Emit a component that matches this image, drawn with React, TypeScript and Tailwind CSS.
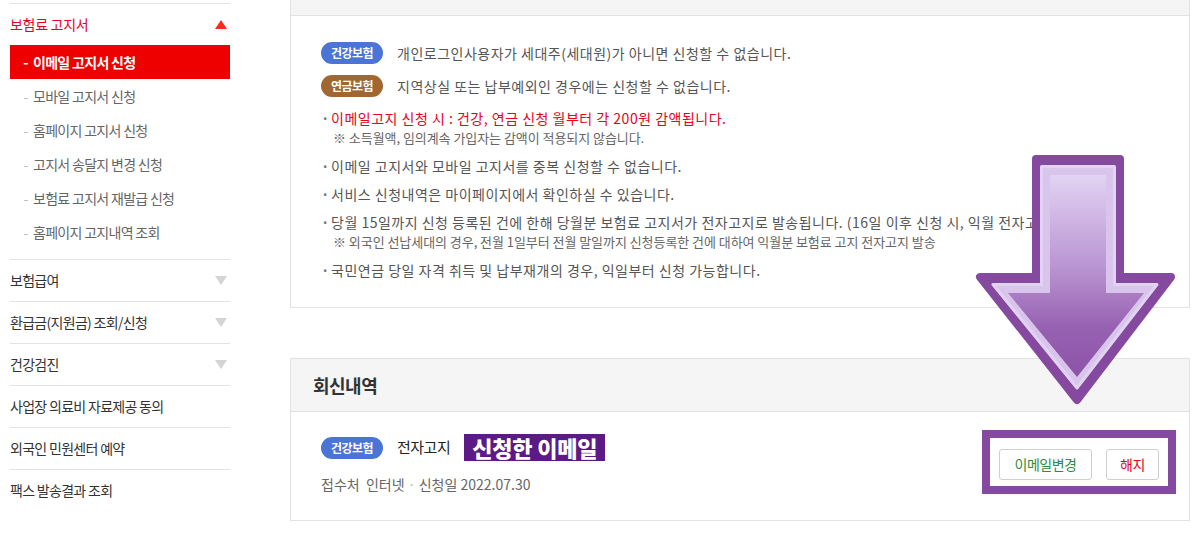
import React from 'react'

const subMenu = ['모바일 고지서 신청', '홈페이지 고지서 신청', '고지서 송달지 변경 신청', '보험료 고지서 재발급 신청', '홈페이지 고지내역 조회']

const otherMenu: { label: string; arrow: boolean }[] = [
    { label: '보험급여', arrow: true },
    { label: '환급금(지원금) 조회/신청', arrow: true },
    { label: '건강검진', arrow: true },
    { label: '사업장 의료비 자료제공 동의', arrow: false },
    { label: '외국인 민원센터 예약', arrow: false },
    { label: '팩스 발송결과 조회', arrow: false },
]

function Badge({ kind }: { kind: 'health' | 'pension' }) {
    return (
        <span
            className={`inline-flex h-[22px] w-[62px] shrink-0 items-center justify-center rounded-full text-[12px] font-bold tracking-[-0.5px] text-white ${kind === 'health' ? 'bg-[#4a74d5]' : 'bg-[#a06830]'}`}
        >
            {kind === 'health' ? '건강보험' : '연금보험'}
        </span>
    )
}

function Bullet({ children, className = '' }: { children: React.ReactNode; className?: string }) {
    return (
        <li className={`flex leading-[20px] ${className}`}>
            <span className="w-[10px] shrink-0 font-bold text-[#777]">·</span>
            <div>{children}</div>
        </li>
    )
}

function Arrow() {
    return (
        <svg className="absolute left-[970px] top-[150px]" width="212" height="262" viewBox="0 0 212 262">
            <defs>
                <linearGradient id="arrowFill" x1="0" y1="25" x2="0" y2="228" gradientUnits="userSpaceOnUse">
                    <stop offset="0" stopColor="#e3d4f3" />
                    <stop offset="0.45" stopColor="#b791d0" />
                    <stop offset="0.75" stopColor="#9259ad" />
                    <stop offset="1" stopColor="#8549a0" />
                </linearGradient>
            </defs>
            <polygon
                points="66,9 150,9 150,127 201,127 107,250 10,127 66,127"
                fill="#8549a0"
                stroke="#8549a0"
                strokeWidth="8"
                strokeLinejoin="round"
            />
            <polygon
                points="71.5,16.5 144.5,16.5 144.5,134.5 187,134.5 107,238 23,134.5 71.5,134.5"
                fill="#e2d3f3"
                fillOpacity="0.9"
                stroke="#e2d3f3"
                strokeWidth="3"
                strokeLinejoin="round"
            />
            <polygon points="80,25 136,25 136,143 174,143 107,227 38,143 80,143" fill="url(#arrowFill)" fillOpacity="0.92" />
        </svg>
    )
}

export default function App() {
    return (
        <div className="relative h-[536px] w-[1203px] overflow-hidden bg-white font-['Noto_Sans_CJK_KR','Noto_Sans',sans-serif] text-[14px] text-[#555]">
            <div className="flex">
                {/* sidebar */}
                <aside className="ml-[10px] mt-[3px] w-[220px] shrink-0 border-t border-[#e2e2e2] tracking-[-0.7px]">
                    <div className="pb-[10px]">
                        <div className="flex h-[41px] items-center justify-between pr-[3px] text-[#e60023]">
                            <span className="tracking-[-0.3px]">보험료 고지서</span>
                            <span className="h-0 w-0 border-x-[6px] border-b-[9px] border-x-transparent border-b-[#ff2a1a]" />
                        </div>
                        <div className="flex h-[34px] items-center bg-[#ee0000] font-bold text-white">
                            <span className="w-[23px] pl-[8px] text-center">-</span>
                            <span>이메일 고지서 신청</span>
                        </div>
                        {subMenu.map(item => (
                            <div key={item} className="flex h-[34px] items-center text-[#666]">
                                <span className="w-[23px] pl-[8px] text-center text-[#bbb]">-</span>
                                <span>{item}</span>
                            </div>
                        ))}
                    </div>
                    {otherMenu.map(item => (
                        <div key={item.label} className="flex h-[42px] items-center justify-between border-t border-[#e2e2e2] pr-[3px] text-[#333]">
                            <span>{item.label}</span>
                            {item.arrow && <span className="h-0 w-0 border-x-[6px] border-t-[9px] border-x-transparent border-t-[#d4d4d4]" />}
                        </div>
                    ))}
                </aside>

                {/* main */}
                <main className="ml-[60px] w-[900px] shrink-0">
                    <section className="border-x border-b border-[#e2e2e2]">
                        <div className="h-[16px] border-b border-[#e2e2e2] bg-[#f5f5f5]" />
                        <div className="px-[30px] pb-[27px] pt-[26px] tracking-[0.5px]">
                            <div className="flex items-center gap-[14px]">
                                <Badge kind="health" />
                                <span>개인로그인사용자가 세대주(세대원)가 아니면 신청할 수 없습니다.</span>
                            </div>
                            <div className="mt-[11px] flex items-center gap-[14px]">
                                <Badge kind="pension" />
                                <span>지역상실 또는 납부예외인 경우에는 신청할 수 없습니다.</span>
                            </div>
                            <ul className="mt-[11px]">
                                <Bullet>
                                    <p className="text-[#e8001c]">이메일고지 신청 시 : 건강, 연금 신청 월부터 각 200원 감액됩니다.</p>
                                    <p className="pl-[2px] text-[13px] tracking-[-0.05px] text-[#666]">※ 소득월액, 임의계속 가입자는 감액이 적용되지 않습니다.</p>
                                </Bullet>
                                <Bullet className="mt-[8px]">이메일 고지서와 모바일 고지서를 중복 신청할 수 없습니다.</Bullet>
                                <Bullet className="mt-[8px]">서비스 신청내역은 마이페이지에서 확인하실 수 있습니다.</Bullet>
                                <Bullet className="mt-[8px]">
                                    <p>당월 15일까지 신청 등록된 건에 한해 당월분 보험료 고지서가 전자고지로 발송됩니다. (16일 이후 신청 시, 익월 전자고지 발송)</p>
                                    <p className="pl-[2px] text-[13px] tracking-[-0.05px] text-[#666]">※ 외국인 선납세대의 경우, 전월 1일부터 전월 말일까지 신청등록한 건에 대하여 익월분 보험료 고지 전자고지 발송</p>
                                </Bullet>
                                <Bullet className="mt-[8px]">국민연금 당일 자격 취득 및 납부재개의 경우, 익일부터 신청 가능합니다.</Bullet>
                            </ul>
                        </div>
                    </section>

                    <section className="mt-[50px] border border-[#e2e2e2]">
                        <div className="flex h-[53px] items-center border-b border-[#e2e2e2] bg-[#f5f5f5] pl-[22px] text-[18px] font-bold tracking-[-0.5px] text-[#333]">
                            회신내역
                        </div>
                        <div className="flex items-center justify-between px-[30px] pb-[26px] pt-[22px]">
                            <div>
                                <div className="flex h-[27px] items-center gap-[14px]">
                                    <Badge kind="health" />
                                    <span className="text-[15px] tracking-[-0.5px] text-[#222]">전자고지</span>
                                    <span className="flex h-[27px] items-center bg-[#5b1a86] px-[8px] text-[22px] font-black tracking-[-0.2px] text-white">
                                        신청한 이메일
                                    </span>
                                </div>
                                <p className="mt-[13px] leading-[20px] text-[#666]">
                                    접수처 &nbsp;인터넷 <span className="text-[#bbb]">·</span> 신청일 2022.07.30
                                </p>
                            </div>
                            <div className="flex gap-[14px] tracking-[-0.5px]">
                                <button className="h-[31px] w-[93px] rounded-[3px] border border-[#cfcfcf] bg-white text-[#2e8b3e]">이메일변경</button>
                                <button className="h-[31px] w-[53px] rounded-[3px] border border-[#cfcfcf] bg-white text-[#e8001c]">해지</button>
                            </div>
                        </div>
                    </section>
                </main>
            </div>

            {/* annotation overlays */}
            <div className="absolute left-[982px] top-[430px] h-[64px] w-[194px] border-[8px] border-[#8549a0]" />
            <Arrow />
        </div>
    )
}
